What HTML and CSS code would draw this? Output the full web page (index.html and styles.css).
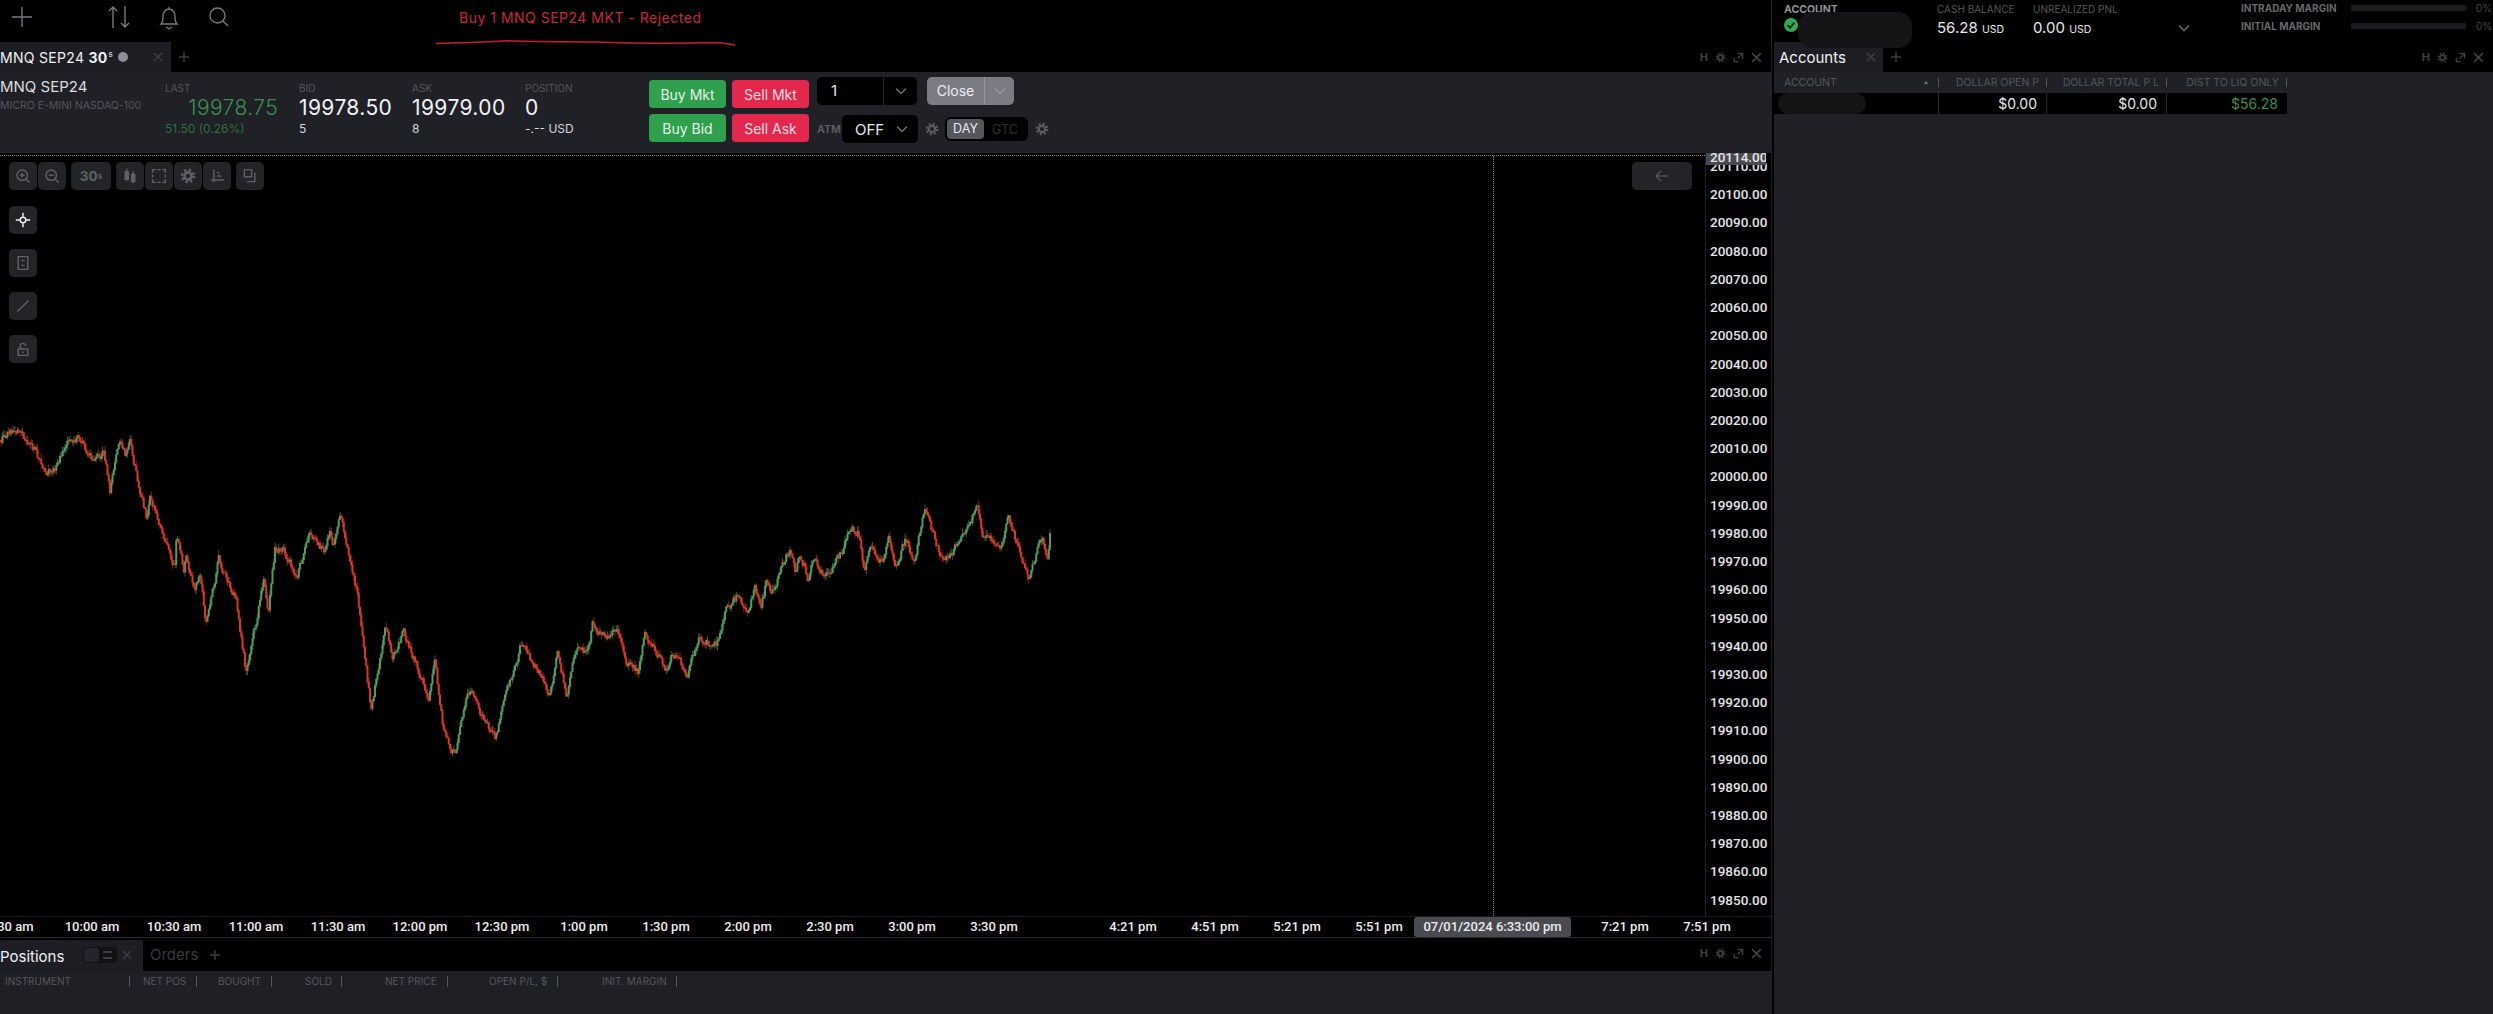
FILE: index.html
```html
<!DOCTYPE html>
<html lang="en">

<head>
  <meta charset="UTF-8">
  <title>Trader - MNQ SEP24</title>
  <link rel="stylesheet" href="styles.css">
</head>

<body>

  <svg class="icon-defs" width="0" height="0">
    <symbol id="gear" viewBox="0 0 16 16">
      <circle cx="8" cy="8" r="3.6" fill="none" stroke="currentColor" stroke-width="2.6" />
      <circle cx="8" cy="8" r="6" fill="none" stroke="currentColor" stroke-width="2.4" stroke-dasharray="2.4 2.31" />
    </symbol>
    <symbol id="chevron" viewBox="0 0 12 8">
      <path d="M1 1.5 6 6.5 11 1.5" fill="none" stroke="currentColor" stroke-width="1.5" />
    </symbol>
    <symbol id="expand" viewBox="0 0 12 12">
      <path d="M5 1.5h5.5V7M10.5 1.5 5 7M1.5 6v4.5H6" fill="none" stroke="currentColor" stroke-width="1.5" />
    </symbol>
    <symbol id="cross" viewBox="0 0 10 10">
      <path d="M1 1 9 9M9 1 1 9" fill="none" stroke="currentColor" stroke-width="1.6" />
    </symbol>
    <symbol id="plus" viewBox="0 0 10 10">
      <path d="M5 0V10M0 5H10" fill="none" stroke="currentColor" stroke-width="1.4" />
    </symbol>
  </svg>

  <div class="workspace">

    <!-- Left column: chart module and positions -->
    <div class="main">
      <div class="topbar">
        <svg class="top-icon top-plus" viewBox="0 0 20 20"><path d="M10 0V20M0 10H20" fill="none" stroke="currentColor" stroke-width="1.4" /></svg>
        <svg class="top-icon top-arrows" viewBox="0 0 22 24"><path d="M5 23V2M1 6l4-4 4 4M17 1V22M13 18l4 4 4-4" fill="none" stroke="currentColor" stroke-width="1.4" /></svg>
        <svg class="top-icon top-bell" viewBox="0 0 20 24"><path d="M2 18c2-2 2-4 2-8 0-4 3-7 6-7s6 3 6 7c0 4 0 6 2 8ZM10 1v2M7 21l3 2 3-2" fill="none" stroke="currentColor" stroke-width="1.4" /></svg>
        <svg class="top-icon top-search" viewBox="0 0 20 20"><circle cx="8.500" cy="8.500" r="7.500" fill="none" stroke="currentColor" stroke-width="1.4" /><path d="M14 14l5 5" fill="none" stroke="currentColor" stroke-width="1.4" /></svg>
        <span class="reject-msg">Buy 1 MNQ SEP24 MKT - Rejected</span>
        <svg class="reject-line" viewBox="0 0 300 8"><path d="M0 3.500C30 3 50 2 72 .8 100 2 130 1.500 160 2 200 3.500 240 3.500 283 2.500L299 5" fill="none" stroke="#c4202c" stroke-width="1.5" /></svg>
      </div>

      <div class="tabbar">
        <div class="tab tab-chart">
          <span class="tab-title">MNQ SEP24 <b>30<sup>s</sup></b></span>
          <span class="tab-dot"></span>
          <svg class="tab-close"><use href="#cross" /></svg>
        </div>
        <svg class="tab-add"><use href="#plus" /></svg>
        <div class="panel-tools">
          <b>H</b>
          <svg><use href="#gear" /></svg>
          <svg><use href="#expand" /></svg>
          <svg><use href="#cross" /></svg>
        </div>
      </div>

      <div class="instrument">
        <div class="symbol">
          <div class="symbol-name">MNQ SEP24</div>
          <div class="label">MICRO E-MINI NASDAQ-100</div>
        </div>
        <div class="quote quote-last">
          <div class="label">LAST</div>
          <div class="quote-price price-up">19978.75</div>
          <div class="quote-sub change-up">51.50 (0.26%)</div>
        </div>
        <div class="quote">
          <div class="label">BID</div>
          <div class="quote-price">19978.50</div>
          <div class="quote-sub">5</div>
        </div>
        <div class="quote">
          <div class="label">ASK</div>
          <div class="quote-price">19979.00</div>
          <div class="quote-sub">8</div>
        </div>
        <div class="quote quote-pos">
          <div class="label">POSITION</div>
          <div class="quote-price">0</div>
          <div class="quote-sub">-.-- USD</div>
        </div>

        <div class="order-buttons">
          <button class="btn btn-buy">Buy Mkt</button>
          <button class="btn btn-sell">Sell Mkt</button>
          <button class="btn btn-buy">Buy Bid</button>
          <button class="btn btn-sell">Sell Ask</button>
        </div>

        <div class="order-options">
          <div class="option-row">
            <div class="qty">
              <span class="qty-value">1</span>
              <span class="qty-arrow"><svg class="chevron"><use href="#chevron" /></svg></span>
            </div>
            <div class="close-btn">
              <span class="close-label">Close</span>
              <span class="close-arrow"><svg class="chevron"><use href="#chevron" /></svg></span>
            </div>
          </div>
          <div class="option-row option-row-atm">
            <span class="atm-label">ATM</span>
            <div class="atm-select">
              <span>OFF</span>
              <svg class="chevron"><use href="#chevron" /></svg>
            </div>
            <svg class="gear-btn"><use href="#gear" /></svg>
            <div class="tif">
              <span class="tif-on">DAY</span>
              <span class="tif-off">GTC</span>
            </div>
            <svg class="gear-btn"><use href="#gear" /></svg>
          </div>
        </div>
      </div>

      <div class="chart-row">
        <div class="plot">
          <svg id="priceChart" class="price-chart" viewBox="0 156 1705 761"></svg>
          <div class="crosshair"></div>

          <div class="chart-tools">
            <div class="tool-group">
              <span class="tool"><svg viewBox="0 0 20 20"><circle cx="9" cy="9" r="6.500" /><path d="M14 14l4.500 4.500M6 9h6M9 6v6" /></svg></span>
              <span class="tool"><svg viewBox="0 0 20 20"><circle cx="9" cy="9" r="6.500" /><path d="M14 14l4.500 4.500M6 9h6" /></svg></span>
            </div>
            <span class="tool tool-wide">30<sup>s</sup></span>
            <div class="tool-group">
              <span class="tool"><svg viewBox="0 0 20 20"><path class="solid" d="M6 1v4M6 14v2M14 4v4M14 17v2M4 5h4v9H4ZM12 8h4v9h-4Z" /></svg></span>
              <span class="tool"><svg viewBox="0 0 20 20"><path d="M2 6V2h4M8 2h4M14 2h4v4M18 8v4M18 14v4h-4M12 18H8M6 18H2v-4M2 12V8" /></svg></span>
              <span class="tool"><svg class="tool-gear"><use href="#gear" /></svg></span>
              <span class="tool"><svg viewBox="0 0 20 20"><path d="M6 2v16M2 15h17M10 6h3M10 10h5" /></svg></span>
            </div>
            <span class="tool tool-single"><svg viewBox="0 0 20 20"><path d="M3 2h9v9H3ZM16 6v11H6" /></svg></span>
          </div>

          <div class="side-tools">
            <span class="tool tool-on"><svg viewBox="0 0 20 20"><circle cx="10" cy="10" r="3.500" /><path d="M10 1v5M10 14v5M1 10h5M14 10h5" /></svg></span>
            <span class="tool"><svg viewBox="0 0 20 20"><path d="M4 2h12v16H4ZM8 7h4M8 13h4" /></svg></span>
            <span class="tool"><svg viewBox="0 0 20 20"><path d="M3 17 17 3" /></svg></span>
            <span class="tool"><svg viewBox="0 0 20 20"><path d="M4 10h12v8H4ZM6.500 10V6c0-4 6-4 7 0M9 14h2" /></svg></span>
          </div>

          <span class="back-btn"><svg viewBox="0 0 16 14"><path d="M15 7H1M7 1 1 7l6 6" /></svg></span>
        </div>

        <div class="price-axis">
          <span class="axis-current">20114.00</span>
          <div class="tick">20110.00</div>
          <div class="tick">20100.00</div>
          <div class="tick">20090.00</div>
          <div class="tick">20080.00</div>
          <div class="tick">20070.00</div>
          <div class="tick">20060.00</div>
          <div class="tick">20050.00</div>
          <div class="tick">20040.00</div>
          <div class="tick">20030.00</div>
          <div class="tick">20020.00</div>
          <div class="tick">20010.00</div>
          <div class="tick">20000.00</div>
          <div class="tick">19990.00</div>
          <div class="tick">19980.00</div>
          <div class="tick">19970.00</div>
          <div class="tick">19960.00</div>
          <div class="tick">19950.00</div>
          <div class="tick">19940.00</div>
          <div class="tick">19930.00</div>
          <div class="tick">19920.00</div>
          <div class="tick">19910.00</div>
          <div class="tick">19900.00</div>
          <div class="tick">19890.00</div>
          <div class="tick">19880.00</div>
          <div class="tick">19870.00</div>
          <div class="tick">19860.00</div>
          <div class="tick">19850.00</div>
        </div>
      </div>

      <div class="time-axis">
        <div class="time-labels">
          <span>9:30 am</span>
          <span>10:00 am</span>
          <span>10:30 am</span>
          <span>11:00 am</span>
          <span>11:30 am</span>
          <span>12:00 pm</span>
          <span>12:30 pm</span>
          <span>1:00 pm</span>
          <span>1:30 pm</span>
          <span>2:00 pm</span>
          <span>2:30 pm</span>
          <span>3:00 pm</span>
          <span>3:30 pm</span>
          <span class="time-gap"></span>
          <span>4:21 pm</span>
          <span>4:51 pm</span>
          <span>5:21 pm</span>
          <span>5:51 pm</span>
          <span></span>
          <span></span>
          <span>7:21 pm</span>
          <span>7:51 pm</span>
        </div>
        <span class="time-current">07/01/2024 6:33:00 pm</span>
      </div>

      <div class="tabbar tabbar-bottom">
        <div class="tab tab-positions">
          <span class="tab-title">Positions</span>
          <span class="view-toggle">
            <i class="toggle-on"></i>
            <i class="toggle-list"></i>
          </span>
          <svg class="tab-close"><use href="#cross" /></svg>
        </div>
        <span class="tab-inactive">Orders</span>
        <svg class="tab-add"><use href="#plus" /></svg>
        <div class="panel-tools">
          <b>H</b>
          <svg><use href="#gear" /></svg>
          <svg><use href="#expand" /></svg>
          <svg><use href="#cross" /></svg>
        </div>
      </div>

      <div class="positions">
        <div class="pos-col pos-instrument">INSTRUMENT</div>
        <div class="pos-col pos-net">NET POS</div>
        <div class="pos-col pos-bought">BOUGHT</div>
        <div class="pos-col pos-sold">SOLD</div>
        <div class="pos-col pos-price">NET PRICE</div>
        <div class="pos-col pos-open">OPEN P/L, $</div>
        <div class="pos-col pos-margin">INIT. MARGIN</div>
      </div>
    </div>

    <!-- Right column: account summary and accounts table -->
    <div class="side">
      <div class="account-bar">
        <div class="acct-name">
          <div class="acct-title">ACCOUNT</div>
          <span class="acct-check"><svg viewBox="0 0 14 14"><path d="M3.500 7.200 6 9.800 10.500 4.500" fill="none" stroke="#0c2a14" stroke-width="1.800" /></svg></span>
          <span class="redacted redacted-name"></span>
        </div>
        <div class="acct-stat acct-cash">
          <div class="label">CASH BALANCE</div>
          <div class="acct-value">56.28 <small>USD</small></div>
        </div>
        <div class="acct-stat acct-pnl">
          <div class="label">UNREALIZED PNL</div>
          <div class="acct-value">0.00 <small>USD</small></div>
        </div>
        <svg class="chevron acct-chevron"><use href="#chevron" /></svg>
        <div class="margins">
          <div class="margin-row">
            <span class="margin-name">INTRADAY MARGIN</span>
            <span class="margin-track"></span>
            <span class="margin-pct">0%</span>
          </div>
          <div class="margin-row">
            <span class="margin-name">INITIAL MARGIN</span>
            <span class="margin-track"></span>
            <span class="margin-pct">0%</span>
          </div>
        </div>
      </div>

      <div class="tabbar">
        <div class="tab tab-accounts">
          <span class="tab-title">Accounts</span>
          <svg class="tab-close"><use href="#cross" /></svg>
        </div>
        <svg class="tab-add"><use href="#plus" /></svg>
        <div class="panel-tools">
          <b>H</b>
          <svg><use href="#gear" /></svg>
          <svg><use href="#expand" /></svg>
          <svg><use href="#cross" /></svg>
        </div>
      </div>

      <div class="accounts">
        <div class="acct-table">
          <div class="acct-head acct-c1">ACCOUNT <span class="sort-mark"></span></div>
          <div class="acct-head acct-c2">DOLLAR OPEN P</div>
          <div class="acct-head acct-c3">DOLLAR TOTAL P L</div>
          <div class="acct-head acct-c4">DIST TO LIQ ONLY</div>
          <div class="acct-cell acct-c1"><span class="redacted redacted-row"></span></div>
          <div class="acct-cell acct-c2">$0.00</div>
          <div class="acct-cell acct-c3">$0.00</div>
          <div class="acct-cell acct-c4 liq-value">$56.28</div>
        </div>
      </div>
    </div>

  </div>

  <script src="chart.js"></script>
</body>

</html>
```

FILE: styles.css
```css
/* Base */

* {
  box-sizing: border-box;
}

html {
  height: 100%;
}

body {
  margin: 0;
  width: 2493px;
  height: 1014px;
  overflow: hidden;
  background-color: #000;
  color: #e8e8ea;
  font-family: Inter, "Liberation Sans", sans-serif;
}

.icon-defs {
  position: absolute;
}

.workspace {
  display: flex;
  height: 1014px;
}

.main {
  width: 1772px;
  height: 1014px;
  display: flex;
  flex-direction: column;
  border-right: 1px solid #222327;
}

.side {
  flex: 1;
  margin-left: 2px;
  display: flex;
  flex-direction: column;
}

.label {
  font-size: 10px;
  color: #55565b;
  white-space: nowrap;
}

/* Top bar */

.topbar {
  height: 42px;
  position: relative;
  flex-shrink: 0;
}

.top-icon {
  position: absolute;
  color: #77787c;
}

.top-plus {
  left: 12px;
  top: 7px;
  width: 20px;
  height: 20px;
}

.top-arrows {
  left: 108px;
  top: 5px;
  width: 22px;
  height: 24px;
}

.top-bell {
  left: 159px;
  top: 6px;
  width: 20px;
  height: 24px;
}

.top-search {
  left: 209px;
  top: 7px;
  width: 20px;
  height: 20px;
}

.reject-msg {
  position: absolute;
  left: 459px;
  top: 9px;
  font-size: 14px;
  line-height: 17px;
  letter-spacing: 0.5px;
  color: #c8283c;
  white-space: nowrap;
}

.reject-line {
  position: absolute;
  left: 436px;
  top: 40px;
  width: 300px;
  height: 8px;
}

/* Tabs */

.tabbar {
  height: 30px;
  display: flex;
  align-items: center;
  flex-shrink: 0;
  position: relative;
}

.tab {
  height: 100%;
  display: flex;
  align-items: center;
  background-color: #1d1e23;
  position: relative;
}

.tab-title {
  font-size: 14px;
  letter-spacing: 0.3px;
  color: #f0f0f2;
  white-space: nowrap;
}

.tab-title b {
  font-weight: 700;
}

.tab-title sup {
  margin-left: 1px;
  font-size: 8px;
  font-weight: 400;
  line-height: 0;
}

.tab-chart {
  width: 171px;
}

.tab-dot {
  width: 10px;
  height: 10px;
  margin-left: 5px;
  border-radius: 50%;
  background-color: #8d8e92;
}

.tab-close {
  width: 10px;
  height: 10px;
  position: absolute;
  color: #3d3e43;
}

.tab-chart .tab-close {
  left: 153px;
  top: 10px;
}

.tab-add {
  width: 10px;
  height: 10px;
  margin-left: 8px;
  color: #3d3e43;
}

.panel-tools {
  position: absolute;
  right: 9px;
  top: 9px;
  display: flex;
  align-items: center;
  gap: 7px;
  color: #3d3e43;
  font-size: 11px;
  line-height: 12px;
}

.panel-tools svg {
  width: 11px;
  height: 11px;
}

/* Instrument header */

.instrument {
  height: 81px;
  flex-shrink: 0;
  display: flex;
  background-color: #1f2127;
  margin-bottom: 2px;
}

.symbol {
  width: 165px;
  padding-top: 6px;
}

.symbol-name {
  font-size: 15px;
  line-height: 18px;
  color: #dcdcdf;
  white-space: nowrap;
}

.symbol .label {
  margin-top: 3px;
  font-size: 10.500px;
}

.quote {
  width: 113px;
  padding-top: 11px;
}

.quote .label {
  line-height: 11px;
}

.quote-last {
  width: 134px;
}

.quote-last .quote-price {
  width: 113px;
  text-align: right;
  font-weight: 300;
}

.quote-pos {
  width: 124px;
}

.quote-price {
  margin-top: 2px;
  font-size: 21px;
  letter-spacing: 0.4px;
  line-height: 24px;
  color: #f2f2f4;
  white-space: nowrap;
}

.price-up {
  color: #3b8f4a;
}

.quote-sub {
  margin-top: 1px;
  font-size: 12px;
  line-height: 15px;
  color: #d8d8da;
  white-space: nowrap;
}

.change-up {
  color: #2f6f3d;
}

.order-buttons {
  display: grid;
  grid-template-columns: 77px 77px;
  grid-auto-rows: 28px;
  gap: 6px;
  padding-top: 8px;
}

.btn {
  border: none;
  border-radius: 4px;
  padding: 0;
  font-family: inherit;
  font-size: 14px;
  color: #e6f2e9;
}

.btn-buy {
  background-color: #2fa04e;
}

.btn-sell {
  background-color: #e4274c;
  color: #f7dfe4;
}

.order-options {
  margin-left: 8px;
  padding-top: 5px;
}

.option-row {
  display: flex;
  height: 28px;
}

.option-row-atm {
  margin-top: 10px;
  align-items: center;
}

.chevron {
  width: 12px;
  height: 8px;
  color: #6d6e73;
}

.qty {
  width: 100px;
  display: flex;
  background-color: #000;
  border-radius: 5px;
}

.qty-value {
  width: 67px;
  padding-left: 14px;
  font-size: 15px;
  line-height: 28px;
  border-right: 1px solid #222327;
}

.qty-arrow,
.close-arrow {
  flex: 1;
  display: flex;
  align-items: center;
  justify-content: center;
}

.close-btn {
  width: 87px;
  margin-left: 10px;
  display: flex;
  background-color: #7b7c83;
  border-radius: 5px;
}

.close-label {
  width: 58px;
  text-align: center;
  font-size: 14px;
  line-height: 28px;
  color: #eeeef0;
  border-right: 1px solid #96979d;
}

.close-arrow .chevron {
  color: #96979d;
}

.atm-label {
  width: 25px;
  font-size: 10.500px;
  font-weight: 700;
  color: #5a5b61;
}

.atm-select {
  width: 76px;
  height: 28px;
  display: flex;
  align-items: center;
  justify-content: space-between;
  padding: 0 10px 0 13px;
  background-color: #000;
  border-radius: 5px;
  font-size: 15px;
}

.gear-btn {
  width: 14px;
  height: 14px;
  margin-left: 7px;
  color: #5a5b61;
}

.tif {
  width: 83px;
  height: 24px;
  margin-left: 6px;
  padding: 2px;
  display: flex;
  align-items: center;
  background-color: #000;
  border-radius: 6px;
  font-size: 12.500px;
}

.tif-on {
  width: 37px;
  height: 20px;
  line-height: 20px;
  text-align: center;
  background-color: #55565e;
  border-radius: 4px;
}

.tif-off {
  flex: 1;
  text-align: center;
  color: #2f3034;
}

/* Chart */

.chart-row {
  flex: 1;
  display: flex;
  min-height: 0;
}

.plot {
  width: 1705px;
  position: relative;
  border-top: 1px dotted #8a8a8a;
}

.price-chart {
  position: absolute;
  left: 0;
  top: 0;
  width: 1705px;
  height: 761px;
  filter: blur(0.4px);
}

.crosshair {
  position: absolute;
  left: 1493px;
  top: 0;
  bottom: 0;
  border-left: 1px dotted #8a8a8a;
}

.chart-tools {
  position: absolute;
  left: 9px;
  top: 6px;
  display: flex;
  gap: 5px;
}

.tool-group {
  display: flex;
  gap: 1px;
}

.tool {
  width: 28px;
  height: 28px;
  display: flex;
  align-items: center;
  justify-content: center;
  background-color: #232428;
  border-radius: 5px;
  color: #5f6066;
}

.tool svg {
  width: 16px;
  height: 16px;
  fill: none;
  stroke: currentColor;
  stroke-width: 1.800;
}

.tool svg .solid {
  fill: currentColor;
}

.tool .tool-gear {
  stroke: none;
}

.tool-wide {
  width: 40px;
  font-size: 13.500px;
  font-weight: 700;
}

.tool-wide sup {
  font-size: 8px;
  line-height: 0;
}

.side-tools {
  position: absolute;
  left: 9px;
  top: 50px;
  display: flex;
  flex-direction: column;
  gap: 15px;
}

.tool-on {
  color: #f2f2f4;
}

.back-btn {
  position: absolute;
  left: 1632px;
  top: 6px;
  width: 60px;
  height: 28px;
  display: flex;
  align-items: center;
  justify-content: center;
  background-color: #232428;
  border-radius: 5px;
  color: #5f6066;
}

.back-btn svg {
  width: 14px;
  height: 12px;
  fill: none;
  stroke: currentColor;
  stroke-width: 1.400;
}

.price-axis {
  flex: 1;
  margin-top: -2px;
  position: relative;
  overflow: hidden;
  border-left: 1px solid #222327;
}

.tick {
  height: 28.230px;
  line-height: 28.230px;
  padding-left: 4px;
  font-family: Roboto, sans-serif;
  font-size: 13.500px;
  font-weight: 500;
  color: #e4e4e6;
}

.axis-current + .tick {
  margin-top: -1px;
}

.axis-current {
  position: absolute;
  left: 0;
  top: 0;
  width: 60px;
  height: 12px;
  overflow: hidden;
  padding-left: 4px;
  background-color: #4a4b50;
  font-family: Roboto, sans-serif;
  font-size: 13.500px;
  font-weight: 500;
  line-height: 9px;
  color: #e4e4e6;
}

.time-axis {
  height: 22px;
  flex-shrink: 0;
  position: relative;
  overflow: hidden;
  border-top: 1px solid #1a1b1f;
  border-bottom: 1px solid #2a2b2f;
}

.time-labels {
  display: flex;
  margin-left: -31px;
  font-family: Roboto, sans-serif;
  font-size: 13px;
  font-weight: 500;
  line-height: 20px;
  color: #ececee;
}

.time-labels span {
  width: 82px;
  flex-shrink: 0;
  text-align: center;
  white-space: nowrap;
}

.time-labels .time-gap {
  width: 57px;
}

.time-current {
  position: absolute;
  left: 1414px;
  top: 0;
  width: 157px;
  height: 20px;
  text-align: center;
  background-color: #4a4b50;
  border-radius: 3px;
  font-family: Roboto, sans-serif;
  font-size: 13px;
  font-weight: 500;
  line-height: 20px;
  color: #ececee;
}

/* Positions */

.tabbar-bottom {
  height: 33px;
}

.tabbar-bottom .tab-add {
  margin-left: 12px;
}

.tab-positions {
  width: 143px;
  margin-top: 3px;
}

.tab-positions .tab-title {
  font-size: 15px;
  letter-spacing: 0;
}

.view-toggle {
  position: absolute;
  left: 83px;
  top: 7px;
  width: 34px;
  height: 16px;
  display: flex;
  background-color: #111215;
  border-radius: 3px;
}

.toggle-on {
  width: 15px;
  margin: 1px;
  background-color: #24252a;
  border-radius: 3px;
}

.toggle-list {
  width: 9px;
  height: 8px;
  margin: 4px 0 0 3px;
  border-top: 2px solid #3d3e43;
  border-bottom: 2px solid #3d3e43;
}

.tab-positions .tab-close {
  left: 122px;
  top: 10px;
}

.tab-inactive {
  margin-left: 7px;
  font-size: 15px;
  color: #3a3b40;
}

.positions {
  height: 43px;
  flex-shrink: 0;
  display: flex;
  padding-top: 5px;
  background-color: #1f2026;
}

.pos-col {
  height: 11px;
  font-size: 10px;
  line-height: 11px;
  color: #55565b;
  white-space: nowrap;
  border-right: 1px solid #55565b;
}

.pos-instrument {
  width: 130px;
  padding-left: 5px;
}

.pos-net {
  width: 67px;
  padding-left: 13px;
}

.pos-bought {
  width: 75px;
  padding-left: 21px;
}

.pos-sold {
  width: 70px;
  padding-left: 33px;
}

.pos-price {
  width: 106px;
  padding-left: 43px;
}

.pos-open {
  width: 110px;
  padding-left: 41px;
}

.pos-margin {
  width: 119px;
  padding-left: 44px;
}

/* Account summary */

.account-bar {
  height: 42px;
  position: relative;
  flex-shrink: 0;
}

.acct-name {
  position: absolute;
  left: 10px;
  top: 3px;
}

.acct-title {
  font-size: 10.500px;
  font-weight: 700;
  line-height: 13px;
  color: #8f9095;
}

.acct-check {
  position: absolute;
  left: 0;
  top: 15px;
  width: 14px;
  height: 14px;
  border-radius: 50%;
  background-color: #34a853;
}

.acct-check svg {
  display: block;
  width: 14px;
  height: 14px;
}

.redacted {
  display: block;
  background-color: #141416;
  border-radius: 14px;
}

.redacted-name {
  position: absolute;
  z-index: 1;
  left: 14px;
  top: 9px;
  width: 114px;
  height: 36px;
}

.acct-stat {
  position: absolute;
  top: 3px;
}

.acct-stat .label {
  line-height: 13px;
}

.acct-cash {
  left: 163px;
}

.acct-pnl {
  left: 259px;
}

.acct-value {
  margin-top: 3px;
  font-size: 15px;
  line-height: 18px;
  white-space: nowrap;
}

.acct-value small {
  font-size: 10.500px;
}

.acct-chevron {
  position: absolute;
  left: 404px;
  top: 24px;
}

.margins {
  position: absolute;
  left: 467px;
  top: 2px;
  width: 252px;
}

.margin-row {
  display: flex;
  align-items: center;
  height: 12px;
  margin-bottom: 6px;
}

.margin-name {
  width: 110px;
  font-size: 10px;
  font-weight: 700;
  color: #66676c;
  white-space: nowrap;
}

.margin-track {
  width: 115px;
  height: 6px;
  background-color: #1b1c20;
}

.margin-pct {
  margin-left: 10px;
  font-size: 10px;
  color: #44454a;
}

/* Accounts table */

.tab-accounts {
  width: 109px;
  padding-left: 5px;
}

.tab-accounts .tab-title {
  font-size: 15px;
  letter-spacing: 0;
}

.tab-accounts .tab-close {
  left: 92px;
  top: 10px;
}

.accounts {
  flex: 1;
  background-color: #1f2127;
}

.acct-table {
  width: 513px;
  display: grid;
  grid-template-columns: 165px 108px 120px 120px;
  grid-template-rows: 21px 21px;
}

.acct-head {
  font-size: 10.500px;
  line-height: 21px;
  color: #55565b;
  text-align: right;
  padding-right: 8px;
  white-space: nowrap;
  position: relative;
}

.acct-head::after {
  content: "";
  position: absolute;
  right: 0;
  top: 6px;
  height: 9px;
  border-right: 1px solid #55565b;
}

.acct-head.acct-c1 {
  text-align: left;
  padding-left: 10px;
}

.sort-mark {
  position: absolute;
  right: 11px;
  top: 9px;
  border-left: 2px solid transparent;
  border-right: 2px solid transparent;
  border-bottom: 3px solid #77787c;
}

.acct-cell {
  background-color: #000;
  font-size: 14px;
  line-height: 21px;
  text-align: right;
  padding-right: 9px;
  border-right: 1px solid #2a2b2f;
}

.acct-cell.acct-c4 {
  border-right: none;
}

.liq-value {
  color: #3b8f4a;
}

.redacted-row {
  margin: 0 0 0 4px;
  width: 88px;
  height: 21px;
}
```

FILE: chart.js
```js
// Draws the 30 second bars into the price chart.

// Turning points of the session, read off in plot pixels
const morning = [
  [0, 90], [40, 55], [60, 70], [100, 125], [125, 190], [155, 180], [165, 145], [200, 85], [230, 90],
  [265, 155], [290, 125], [308, 240], [335, 70], [350, 140], [365, 95], [395, 260], [410, 320],
  [420, 260], [490, 470], [495, 370], [515, 480], [520, 430], [545, 530], [560, 510], [578, 640],
  [612, 450], [660, 560], [690, 790], [740, 500], [752, 605], [770, 425], [790, 405], [830, 500],
  [870, 365], [905, 420], [925, 375], [935, 410], [950, 300], [1000, 550], [1040, 905], [1080, 640],
  [1100, 740], [1130, 670], [1150, 710], [1200, 860], [1218, 755], [1240, 950], [1275, 1040],
  [1310, 830], [1385, 990], [1400, 920], [1460, 700], [1540, 845]
].map(([x, y]) => [x / 2.8, 410 + y / 3]);

const afternoon = [
  [0, 745], [40, 590], [60, 460], [90, 550], [100, 480], [135, 605], [155, 490], [180, 610],
  [205, 480], [235, 500], [250, 410], [300, 440], [320, 420], [345, 530], [375, 545], [390, 420],
  [450, 545], [465, 485], [505, 550], [540, 445], [585, 470], [615, 340], [640, 325], [665, 375],
  [690, 295], [705, 345], [720, 270], [735, 300], [785, 170], [800, 245], [810, 180], [835, 270],
  [850, 195], [875, 255], [925, 190], [948, 115], [968, 120], [985, 240], [1005, 170], [1035, 225],
  [1052, 150], [1070, 230], [1095, 150], [1120, 200], [1148, 60], [1195, 210], [1222, 190],
  [1290, 50], [1305, 130], [1350, 185], [1375, 85], [1430, 270], [1465, 145], [1480, 215], [1486, 135]
].map(([x, y]) => [500 + x / 2.703, 490 + y / 3]);

const points = morning.concat(afternoon);

// Small seeded generator so the bars come out the same each time
let seed = 20240701;
const random = () => {
  seed = (seed * 1664525 + 1013904223) % 4294967296;
  return seed / 4294967296;
};

const lineAt = (x) => {
  let i = 1;
  while (i < points.length - 1 && points[i][0] < x) i++;
  const [x0, y0] = points[i - 1];
  const [x1, y1] = points[i];
  return y0 + (y1 - y0) * (x - x0) / (x1 - x0 || 1);
};

const colors = { up: '#4f9f63', down: '#dc3626', flat: '#b0704a' };
const wicks = { up: '', down: '', flat: '' };
const bodies = { up: '', down: '', flat: '' };

let open = lineAt(0);
let drift = 0;
for (let x = 0; x <= 1050; x += 1.25) {
  // Wander around the line so the trace isn't straight between turning points
  drift = drift * 0.6 + (random() - 0.5) * 8;
  const close = lineAt(x) + drift;
  const size = Math.abs(close - open);
  const kind = size < 0.9 ? 'flat' : close < open ? 'up' : 'down';
  const top = Math.min(open, close);
  const bottom = Math.max(open, close);
  const px = x.toFixed(2);
  wicks[kind] += `M${px} ${(top - random() * 5).toFixed(1)}V${(bottom + random() * 5).toFixed(1)}`;
  bodies[kind] += `M${px} ${top.toFixed(1)}V${(bottom + 0.5).toFixed(1)}`;
  open = close;
}

const chart = document.getElementById('priceChart');
let markup = '';
['flat', 'up', 'down'].forEach((kind) => {
  markup += `<path d="${wicks[kind]}" stroke="${colors[kind]}" stroke-width="0.8" fill="none" opacity="0.75" />`;
  markup += `<path d="${bodies[kind]}" stroke="${colors[kind]}" stroke-width="2" fill="none" />`;
});
chart.innerHTML = markup;
```
